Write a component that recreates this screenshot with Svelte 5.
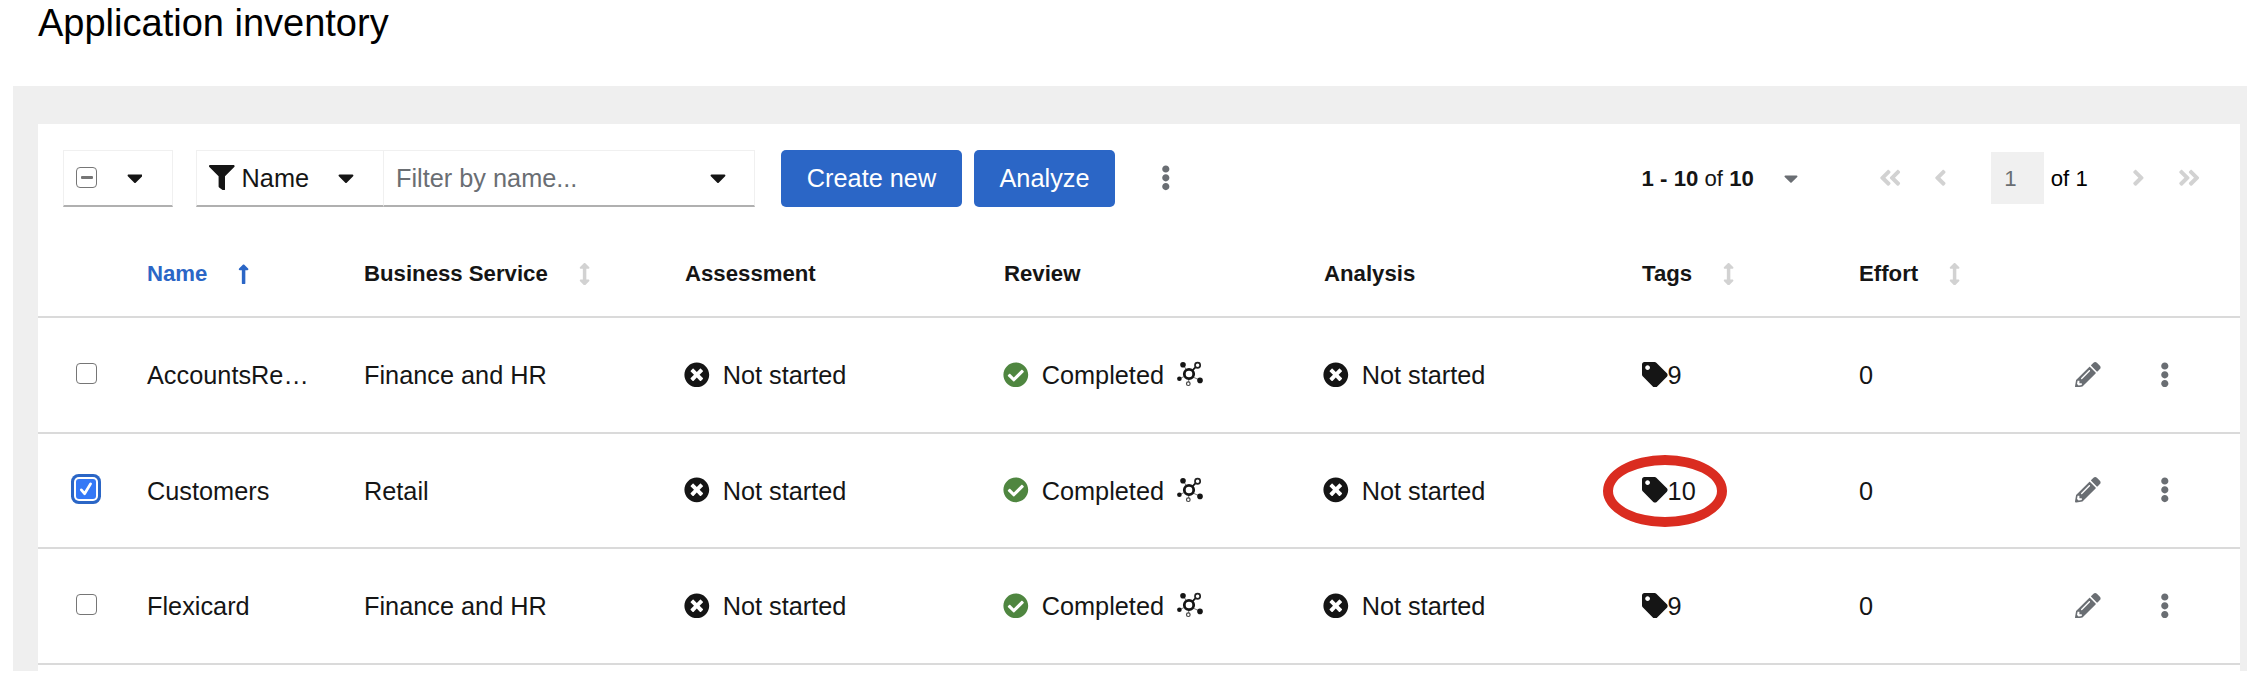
<script>
  const paths = {
    filter: [512, 'M487.976 0H24.028C2.71 0-8.047 25.866 7.058 40.971L192 225.941V432c0 7.831 3.821 15.17 10.237 19.662l80 55.98C298.02 518.69 320 507.493 320 487.98V225.941l184.947-184.97C520.021 25.896 509.338 0 487.976 0z'],
    caret: [320, 'M31.3 192h257.3c17.8 0 26.7 21.5 14.1 34.1L174.1 354.8c-7.8 7.8-20.5 7.8-28.3 0L17.2 226.1C4.6 213.5 13.5 192 31.3 192z'],
    cross: [512, 'M256 8C119 8 8 119 8 256s111 248 248 248 248-111 248-248S393 8 256 8zm121.6 313.1c4.7 4.7 4.7 12.3 0 17L338 377.6c-4.7 4.7-12.3 4.7-17 0L256 312l-65.1 65.6c-4.7 4.7-12.3 4.7-17 0L134.4 338c-4.7-4.7-4.7-12.3 0-17l65.6-65-65.6-65.1c-4.7-4.7-4.7-12.3 0-17l39.6-39.6c4.7-4.7 12.3-4.7 17 0l65 65.7 65.1-65.6c4.7-4.7 12.3-4.7 17 0l39.6 39.6c4.7 4.7 4.7 12.3 0 17L312 256l65.6 65.1z'],
    check: [512, 'M504 256c0 136.967-111.033 248-248 248S8 392.967 8 256 119.033 8 256 8s248 111.033 248 248zM227.314 387.314l184-184c6.248-6.248 6.248-16.379 0-22.627l-22.627-22.627c-6.248-6.249-16.379-6.249-22.628 0L216 308.118l-70.059-70.059c-6.248-6.248-16.379-6.248-22.628 0l-22.627 22.627c-6.248 6.248-6.248 16.379 0 22.627l104 104c6.249 6.249 16.379 6.249 22.628.001z'],
    tag: [512, 'M0 252.118V48C0 21.49 21.49 0 48 0h204.118a48 48 0 0 1 33.941 14.059l211.882 211.882c18.745 18.745 18.745 49.137 0 67.882L293.823 497.941c-18.745 18.745-49.137 18.745-67.882 0L14.059 286.059A48 48 0 0 1 0 252.118zM112 64c-26.51 0-48 21.49-48 48s21.49 48 48 48 48-21.49 48-48-21.49-48-48-48z'],
    pencil: [512, 'M497.9 142.1l-46.1 46.1c-4.7 4.7-12.3 4.7-17 0l-111-111c-4.7-4.7-4.7-12.3 0-17l46.1-46.1c18.7-18.7 49.1-18.7 67.9 0l60.1 60.1c18.8 18.7 18.8 49.1 0 67.9zM284.2 99.8L21.6 362.4.4 483.9c-2.9 16.4 11.4 30.6 27.8 27.8l121.5-21.3 262.6-262.6c4.7-4.7 4.7-12.3 0-17l-111-111c-4.8-4.7-12.4-4.7-17.1 0zM124.1 339.9c-5.5-5.5-5.5-14.3 0-19.8l154-154c5.5-5.5 14.3-5.5 19.8 0s5.5 14.3 0 19.8l-154 154c-5.5 5.5-14.3 5.5-19.8 0zM88 424h48v36.3l-64.5 11.3-31.1-31.1L51.7 376H88v48z'],
    kebab: [192, 'M96 184c39.8 0 72 32.2 72 72s-32.2 72-72 72-72-32.2-72-72 32.2-72 72-72zM24 80c0 39.8 32.2 72 72 72s72-32.2 72-72S135.8 8 96 8 24 40.2 24 80zm0 352c0 39.8 32.2 72 72 72s72-32.2 72-72-32.2-72-72-72-72 32.2-72 72z'],
    sort: [256, 'M214.059 377.941H168V134.059h46.059c21.382 0 32.09-25.851 16.971-40.971L144.97 7.029c-9.373-9.373-24.568-9.373-33.941 0L24.971 93.088c-15.119 15.119-4.411 40.971 16.971 40.971H88v243.882H41.941c-21.382 0-32.09 25.851-16.971 40.971l86.059 86.059c9.373 9.373 24.568 9.373 33.941 0l86.059-86.059c15.12-15.119 4.412-40.971-16.97-40.971z'],
    up: [256, 'M88 166.059V468c0 6.627 5.373 12 12 12h56c6.627 0 12-5.373 12-12V166.059h46.059c21.382 0 32.09-25.851 16.971-40.971l-86.059-86.059c-9.373-9.373-24.569-9.373-33.941 0l-86.059 86.059c-15.119 15.119-4.411 40.971 16.971 40.971H88z'],
    angle: [256, 'M224.3 273l-136 136c-9.4 9.4-24.6 9.4-33.9 0l-22.6-22.6c-9.4-9.4-9.4-24.6 0-33.9l96.4-96.4-96.4-96.4c-9.4-9.4-9.4-24.6 0-33.9L54.3 103c9.4-9.4 24.6-9.4 33.9 0l136 136c9.5 9.4 9.5 24.6.1 34z'],
    angles: [448, 'M224.3 273l-136 136c-9.4 9.4-24.6 9.4-33.9 0l-22.6-22.6c-9.4-9.4-9.4-24.6 0-33.9l96.4-96.4-96.4-96.4c-9.4-9.4-9.4-24.6 0-33.9L54.3 103c9.4-9.4 24.6-9.4 33.9 0l136 136c9.5 9.4 9.5 24.6.1 34zm192-34l-136-136c-9.4-9.4-24.6-9.4-33.9 0l-22.6 22.6c-9.4 9.4-9.4 24.6 0 33.9l96.4 96.4-96.4 96.4c-9.4 9.4-9.4 24.6 0 33.9l22.6 22.6c9.4 9.4 24.6 9.4 33.9 0l136-136c9.4-9.2 9.4-24.4 0-33.8z'],
  };

  const columns = [
    { label: '' },
    { label: 'Name', sort: 'up' },
    { label: 'Business Service', sort: 'sort' },
    { label: 'Assessment' },
    { label: 'Review' },
    { label: 'Analysis' },
    { label: 'Tags', sort: 'sort' },
    { label: 'Effort', sort: 'sort' },
  ];

  const rows = [
    { name: 'AccountsReceivable', service: 'Finance and HR', tags: 9, effort: 0, selected: false },
    { name: 'Customers', service: 'Retail', tags: 10, effort: 0, selected: true },
    { name: 'Flexicard', service: 'Finance and HR', tags: 9, effort: 0, selected: false },
  ];
  const shortName = (s) => (s.length > 11 ? s.slice(0, 10) + '…' : s);
</script>

{#snippet icon(name, cls = '')}
  <svg class="icon {cls}" viewBox="0 0 {paths[name][0]} 512" aria-hidden="true"><path d={paths[name][1]} /></svg>
{/snippet}

<main>
  <h1>Application inventory</h1>
  <section class="panel">
    <div class="card">
      <div class="toolbar">
        <div class="box select">
          <span class="cb dash"></span>
          {@render icon('caret')}
        </div>
        <div class="box category">
          {@render icon('filter')}
          <span class="t">Name</span>
          {@render icon('caret')}
        </div>
        <div class="box search">
          <span class="t">Filter by name...</span>
          {@render icon('caret')}
        </div>
        <button class="create">Create new</button>
        <button class="analyze">Analyze</button>
        <span class="more">{@render icon('kebab')}</span>
        <div class="pages">
          <span class="range t"><b>1 - 10</b> of <b>10</b></span>
          {@render icon('caret', 'range-caret')}
          {@render icon('angles', 'first flip')}
          {@render icon('angle', 'prev flip')}
          <span class="page">1</span>
          <span class="total t">of 1</span>
          {@render icon('angle', 'next')}
          {@render icon('angles', 'last')}
        </div>
      </div>

      <div class="row head">
        {#each columns as c}
          <div class="cell" class:active={c.sort === 'up'}>
            <span>{c.label}</span>
            {#if c.sort}{@render icon(c.sort)}{/if}
          </div>
        {/each}
      </div>

      {#each rows as r}
        <div class="row">
          <div class="cell pick">
            {#if r.selected}
              <span class="cb on">
                <svg viewBox="0 0 18 18"><path d="M4.8 9.8l2.9 3.4 5.4-8.8" /></svg>
              </span>
            {:else}
              <span class="cb"></span>
            {/if}
          </div>
          <div class="cell"><span class="t">{shortName(r.name)}</span></div>
          <div class="cell"><span class="t">{r.service}</span></div>
          <div class="cell status">{@render icon('cross')}<span class="t">Not started</span></div>
          <div class="cell status">
            {@render icon('check', 'green')}<span class="t">Completed</span>
            <svg class="topology" viewBox="0 0 26 26">
              <path d="M7 5l2.5 4M8.2 15L3 17.5M16 16l6 2.8M11.7 18v3" stroke="#777" stroke-width="1" fill="none" />
              <path d="M15 9.8l3.6-3.6" stroke="#151515" stroke-width="1.8" />
              <circle cx="12" cy="13" r="4.7" fill="none" stroke="#151515" stroke-width="2.8" />
              <circle cx="6" cy="3.7" r="2.8" />
              <circle cx="20.6" cy="4.2" r="2.6" fill="none" stroke="#222" stroke-width="1.7" />
              <circle cx="2.4" cy="17.7" r="2.3" />
              <circle cx="23" cy="19.4" r="2.8" />
              <circle cx="11.3" cy="22.7" r="1.8" fill="none" stroke="#444" stroke-width="1.2" />
            </svg>
          </div>
          <div class="cell status">{@render icon('cross')}<span class="t">Not started</span></div>
          <div class="cell tags">
            {@render icon('tag')}<span class="t">{r.tags}</span>
            {#if r.selected}<span class="ring"></span>{/if}
          </div>
          <div class="cell"><span class="t">{r.effort}</span></div>
          <div class="cell tool">{@render icon('pencil')}</div>
          <div class="cell tool">{@render icon('kebab')}</div>
        </div>
      {/each}
    </div>
  </section>
</main>

<style>
  :global(body) { background: #fff; overflow: hidden; }
  main {
    width: 2264px; height: 678px; overflow: hidden; box-sizing: border-box;
    font-family: "Liberation Sans", Arial, sans-serif; font-size: 25.3px; color: #151515;
  }
  h1 { margin: 0; padding: 1px 0 0 38px; height: 86px; box-sizing: border-box; font-size: 38px; font-weight: 400; line-height: 45px; color: #000; }
  .panel { margin-left: 13px; width: 2234px; height: 585px; box-sizing: border-box; padding: 38px 7px 0 25px; background: #efefef; }
  .card { height: 547px; background: #fff; }
  .icon { display: block; height: 25.6px; width: auto; flex: none; fill: currentColor; }
  .flip { transform: scaleX(-1); }
  .t { padding-top: 2px; }

  .toolbar { display: flex; align-items: center; height: 58px; padding: 25px 0 0 25px; line-height: 1; white-space: nowrap; }
  .box { display: flex; align-items: center; box-sizing: border-box; height: 57px; border: 1.6px solid #f0f0f0; border-bottom: 2px solid #b0b0b0; }
  .select { width: 110px; padding-left: 12px; gap: 29.5px; }
  .category { width: 188px; margin-left: 23px; padding-left: 12px; }
  .category span { width: 88px; margin-left: 7px; }
  .category .icon:last-child { margin-left: 8px; }
  .search { width: 371px; border-left: 0; padding: 0 28px 0 12px; justify-content: space-between; color: #6a6e73; }
  .search .icon { color: #151515; }
  button { height: 57px; padding: 2px 0 0; border: 0; border-radius: 5px; background: #2b66c6; color: #fff; font: inherit; }
  .create { width: 181px; margin-left: 26px; }
  .analyze { width: 141px; margin-left: 12px; }
  .more { margin-left: 46px; color: #6a6e73; }
  .pages { display: flex; align-items: center; margin-left: 471px; font-size: 22.2px; color: #d2d2d2; }
  .range { width: 111px; color: #151515; }
  .range-caret { height: 22.4px; margin-left: 31px; color: #6a6e73; }
  .first { margin-left: 81px; }
  .prev { margin-left: 33.5px; }
  .page { display: flex; align-items: center; width: 53px; height: 52px; margin-left: 44px; padding: 2px 0 0 13px; box-sizing: border-box; background: #f0f0f0; color: #6a6e73; }
  .total { width: 36px; margin-left: 6.5px; color: #000; }
  .next { margin-left: 45px; }
  .last { margin-left: 33px; }

  .row {
    display: grid; grid-template-columns: 109px 217px 321px 319px 320px 318px 217px 216px 85px 80px;
    height: 115.6px; box-sizing: border-box; padding-bottom: 1px; border-bottom: 2px solid #dadada;
  }
  .cell { display: flex; align-items: center; white-space: nowrap; line-height: 30px; }
  .head { height: 111px; padding: 25px 0 0; font-size: 22.2px; font-weight: 700; }
  .head .icon { height: 22.4px; margin-left: 31px; color: #d2d2d2; }
  .head .active, .head .active .icon { color: #2b66c6; }
  .pick { justify-content: flex-start; padding-left: 37.5px; padding-bottom: 2px; }
  .cb { display: block; box-sizing: border-box; flex: none; width: 21px; height: 21px; border: 1.6px solid #767676; border-radius: 4px; background: #fff; }
  .dash { display: grid; place-items: center; }
  .dash::after { content: ""; width: 12px; height: 3px; border-radius: 1px; background: #767676; }
  .on { width: 20px; height: 20px; border: 0; margin-left: 0; background: #3478f6; box-shadow: 0 0 0 2px #fff, 0 0 0 5px #2b66c6; border-radius: 3px; }
  .on svg { display: block; width: 20px; height: 20px; }
  .on path { fill: none; stroke: #fff; stroke-width: 2.5; stroke-linecap: round; stroke-linejoin: round; }
  .status .icon { margin-left: -0.7px; }
  .status .t { margin-left: 12.8px; }
  .green { color: #4f8640; }
  .topology { width: 26px; height: 26px; margin-left: 12.5px; overflow: visible; fill: #151515; }
  .tags { position: relative; }
  .ring { position: absolute; left: -39px; top: 21.5px; width: 124px; height: 72px; box-sizing: border-box; border: 10px solid #da2c20; border-radius: 50%; }
  .tool { color: #6a6e73; }
</style>
